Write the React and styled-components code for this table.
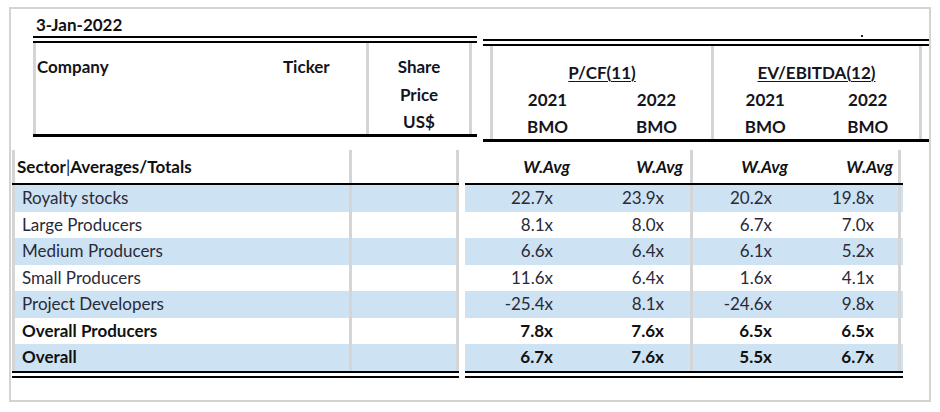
import React from "react";
import styled, { createGlobalStyle } from "styled-components";

const Global = createGlobalStyle`
  html, body { margin: 0; padding: 0; background: #fff; }
  body { font-family: Lato, "Open Sans", sans-serif; color: #1d1d2b; }
`;

const GRID = "#d5d5d5";
const BAND = "#cde2f2";

const Frame = styled.div`
  box-sizing: border-box;
  margin: 7px 0 0 9px;
  width: 922px;
  height: 395px;
  border: 2px solid #d3d3d3;
`;

const DateLabel = styled.div`
  margin: 5px 0 0 25px;
  font-weight: 700;
  font-size: 17px;
  line-height: 22px;
  color: #111;
`;

const HeaderRow = styled.div`
  display: flex;
  align-items: flex-start;
  margin-left: 22px;
  gap: 6px;
`;

const HeadBlock = styled.div`
  box-sizing: content-box;
  width: ${(p) => p.$w}px;
  margin-top: ${(p) => p.$top || 0}px;
  border-top: 7px double #000;
  border-bottom: 3px solid #000;
  height: ${(p) => p.$h}px;
  display: flex;
  position: relative;
`;

const HeadCell = styled.div`
  box-sizing: border-box;
  width: ${(p) => p.$w}px;
  flex: ${(p) => (p.$w ? "none" : "1")};
  height: 100%;
  border-left: ${(p) => (p.$bl ? `3px solid ${GRID}` : "none")};
  border-right: ${(p) => (p.$br ? `3px solid ${GRID}` : "none")};
  padding-top: ${(p) => p.$pt || 0}px;
  display: flex;
  flex-direction: column;
`;

const HeadText = styled.div`
  font-weight: 700;
  font-size: 17px;
  line-height: 27.5px;
  color: #141420;
  text-align: ${(p) => p.$align || "left"};
  padding-left: ${(p) => p.$pl || 0}px;
`;

const CompanyLine = styled.div`
  display: flex;
`;

const CompanyName = styled(HeadText)`
  width: 246px;
`;

const GroupTitle = styled.div`
  font-weight: 700;
  font-size: 17px;
  line-height: 27px;
  text-align: center;
  color: #141420;
  text-decoration: underline;
  text-underline-offset: 2px;
  text-decoration-thickness: 1px;
`;

const YearGrid = styled.div`
  display: grid;
  grid-template-columns: 1fr 1fr;
`;

const YearCell = styled.div`
  font-weight: 700;
  font-size: 17px;
  line-height: 27px;
  text-align: center;
  color: #141420;
`;

const Dot = styled.span`
  position: absolute;
  left: 378px;
  top: -11px;
  width: 2px;
  height: 2px;
  background: #223;
`;

const LowerRow = styled.div`
  display: flex;
  align-items: flex-start;
  margin: 8px 0 0 1px;
  gap: 6px;
`;

const LowerBlock = styled.div`
  width: ${(p) => p.$w}px;
  border-bottom: 7px double #000;
`;

const Row = styled.div`
  display: flex;
  height: ${(p) => (p.$head ? 33 : 26.5)}px;
  background: ${(p) => (p.$band ? BAND : "transparent")};
  border-bottom: ${(p) => (p.$head ? "2px solid #000" : "none")};
  font-weight: ${(p) => (p.$bold || p.$head ? 700 : 400)};
  font-style: ${(p) => (p.$italic ? "italic" : "normal")};
  color: ${(p) => (p.$bold || p.$head ? "#111" : "#2a2a38")};
`;

const Cell = styled.div`
  box-sizing: border-box;
  width: ${(p) => p.$w}px;
  flex: none;
  display: flex;
  align-items: center;
  justify-content: ${(p) => (p.$right ? "flex-end" : "flex-start")};
  padding-left: ${(p) => p.$pl || 0}px;
  padding-right: ${(p) => p.$pr || 0}px;
  border-left: ${(p) => (p.$bl ? `3px solid ${GRID}` : "none")};
  border-right: ${(p) => (p.$br ? `3px solid ${GRID}` : "none")};
  font-size: 17px;
  line-height: 20px;
  white-space: nowrap;
`;

const Bar = styled.span`
  font-weight: 400;
`;

const rows = [
  ["Royalty stocks", "22.7x", "23.9x", "20.2x", "19.8x", false],
  ["Large Producers", "8.1x", "8.0x", "6.7x", "7.0x", false],
  ["Medium Producers", "6.6x", "6.4x", "6.1x", "5.2x", false],
  ["Small Producers", "11.6x", "6.4x", "1.6x", "4.1x", false],
  ["Project Developers", "-25.4x", "8.1x", "-24.6x", "9.8x", false],
  ["Overall Producers", "7.8x", "7.6x", "6.5x", "6.5x", true],
  ["Overall", "6.7x", "7.6x", "5.5x", "6.7x", true],
];

export default function App() {
  return (
    <>
      <Global />
      <Frame>
        <DateLabel>3-Jan-2022</DateLabel>
        <HeaderRow>
          <HeadBlock $w={444} $h={91}>
            <HeadCell $w={333} $bl $pt={10}>
              <CompanyLine>
                <CompanyName $pl={1}>Company</CompanyName>
                <HeadText>Ticker</HeadText>
              </CompanyLine>
            </HeadCell>
            <HeadCell $w={106} $bl $br $pt={10}>
              <HeadText $align="center">Share</HeadText>
              <HeadText $align="center">Price</HeadText>
              <HeadText $align="center">US$</HeadText>
            </HeadCell>
            <HeadCell />
          </HeadBlock>
          <HeadBlock $w={446} $h={93} $top={3}>
            <Dot />
            <HeadCell $w={7} />
            <HeadCell $w={221} $bl $pt={13}>
              <GroupTitle>P/CF(11)</GroupTitle>
              <YearGrid>
                <YearCell>2021</YearCell>
                <YearCell>2022</YearCell>
                <YearCell>BMO</YearCell>
                <YearCell>BMO</YearCell>
              </YearGrid>
            </HeadCell>
            <HeadCell $w={211} $bl $br $pt={13}>
              <GroupTitle>EV/EBITDA(12)</GroupTitle>
              <YearGrid>
                <YearCell>2021</YearCell>
                <YearCell>2022</YearCell>
                <YearCell>BMO</YearCell>
                <YearCell>BMO</YearCell>
              </YearGrid>
            </HeadCell>
            <HeadCell />
          </HeadBlock>
        </HeaderRow>
        <LowerRow>
          <LowerBlock $w={447}>
            <Row $head>
              <Cell $w={337} $bl $pl={2}>
                Sector<Bar>|</Bar>Averages/Totals
              </Cell>
              <Cell $w={110} $bl $br />
            </Row>
            {rows.map((r, i) => (
              <Row key={r[0]} $band={i % 2 === 0} $bold={r[5]}>
                <Cell $w={337} $bl $pl={7}>
                  {r[0]}
                </Cell>
                <Cell $w={110} $bl $br />
              </Row>
            ))}
          </LowerBlock>
          <LowerBlock $w={438}>
            <Row $head $italic>
              <Cell $w={112} $right $pr={7}>W.Avg</Cell>
              <Cell $w={116} $right $pr={7} $br>W.Avg</Cell>
              <Cell $w={102} $right $pr={7}>W.Avg</Cell>
              <Cell $w={106} $right $pr={5} $br>W.Avg</Cell>
            </Row>
            {rows.map((r, i) => (
              <Row key={r[0]} $band={i % 2 === 0} $bold={r[5]}>
                <Cell $w={112} $right $pr={24}>{r[1]}</Cell>
                <Cell $w={116} $right $pr={26} $br>{r[2]}</Cell>
                <Cell $w={102} $right $pr={23}>{r[3]}</Cell>
                <Cell $w={106} $right $pr={24} $br>{r[4]}</Cell>
              </Row>
            ))}
          </LowerBlock>
        </LowerRow>
      </Frame>
    </>
  );
}
